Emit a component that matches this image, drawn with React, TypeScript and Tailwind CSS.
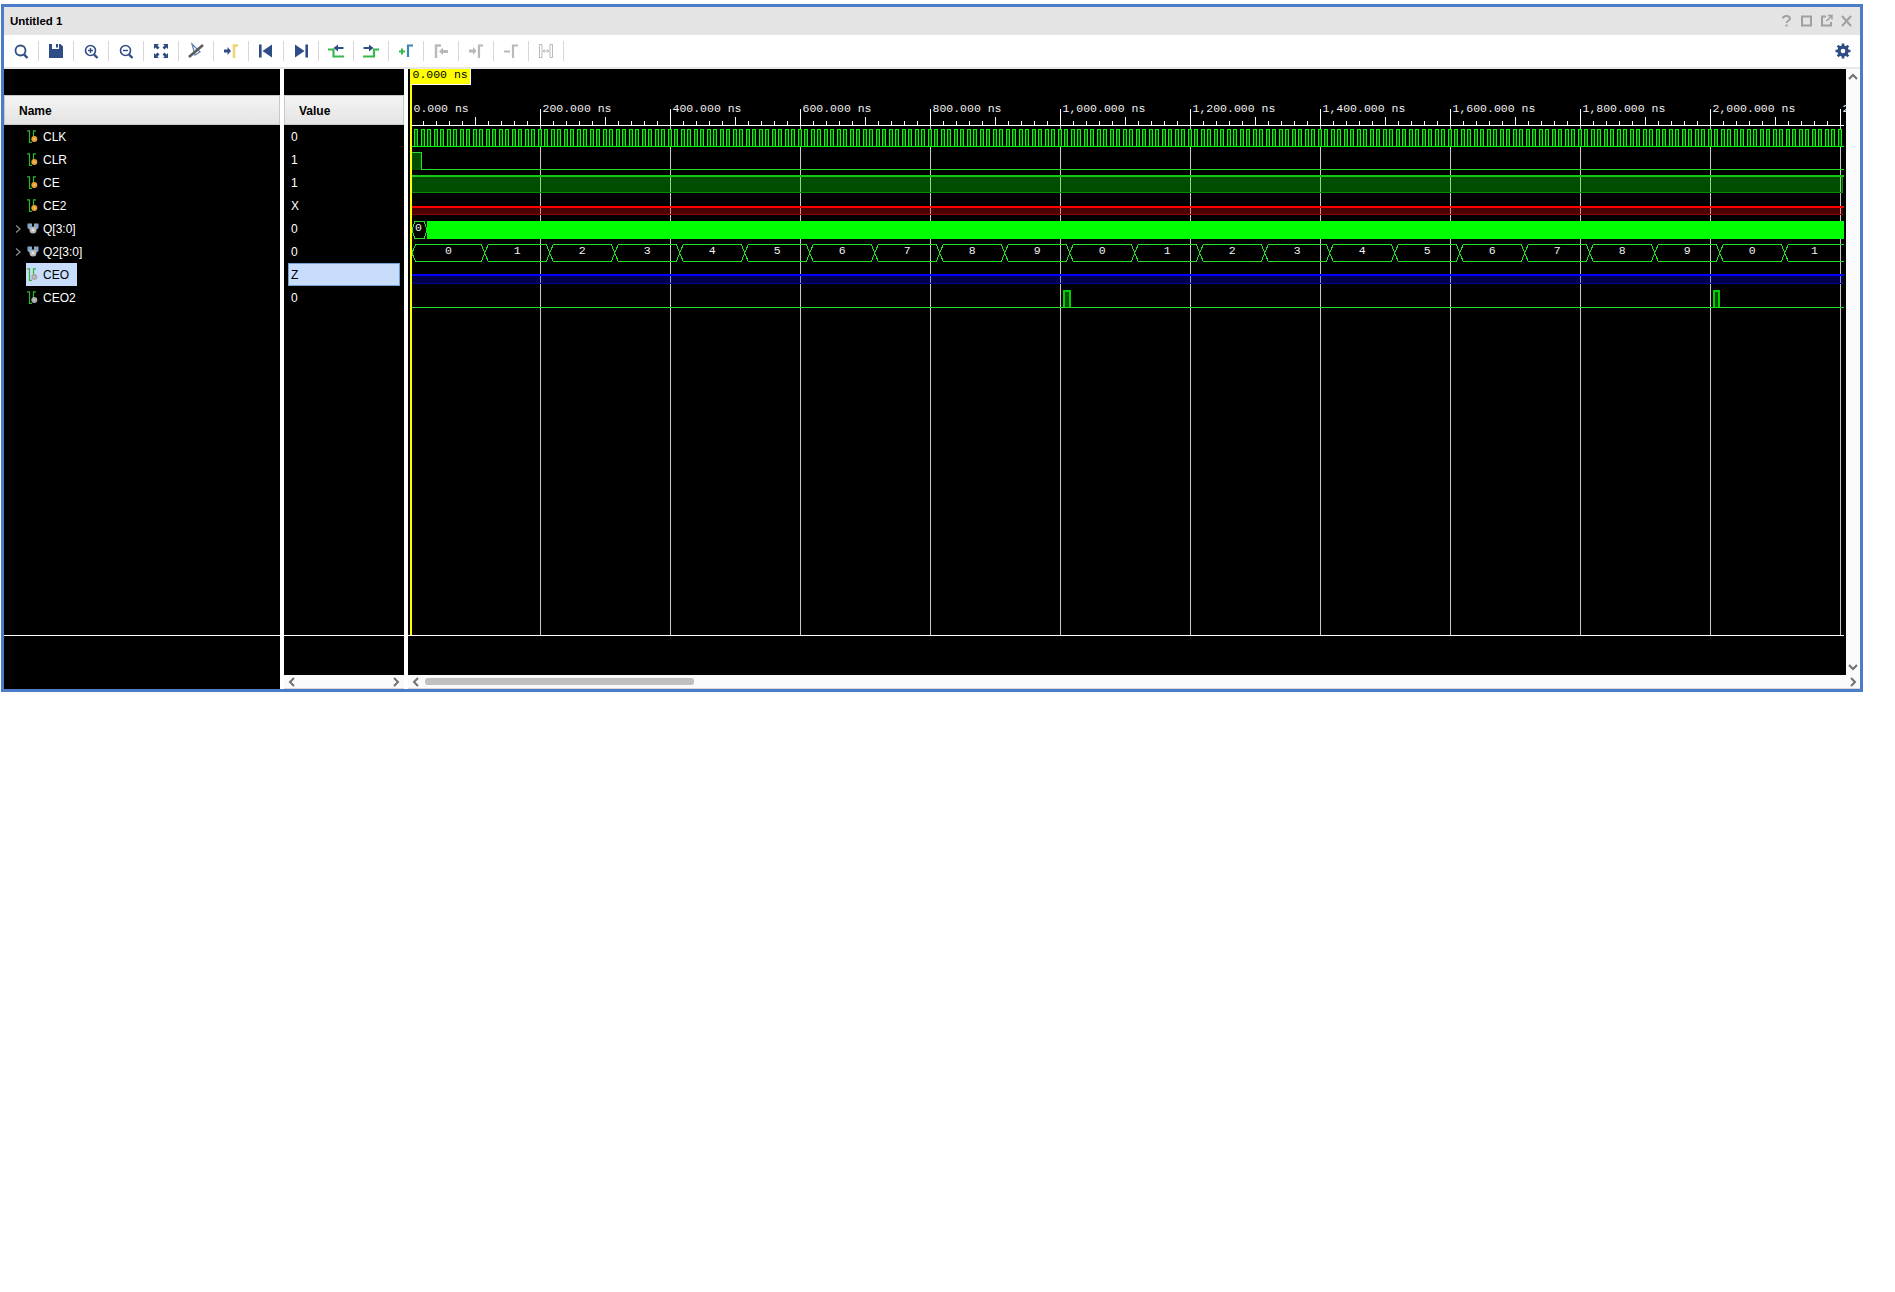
import React from "react";

const NAVY = "#2f4d85";
const GREY = "#b9b9b9";
const GREEN = "#2fb52f";

function I({ children, w = 20 }: { children: React.ReactNode; w?: number }) {
  return (
    <svg width={w} height={20} viewBox="0 0 20 20" fill="none">
      {children}
    </svg>
  );
}

const tools: React.ReactNode[] = [
  <I key="a">
    <circle cx="9.5" cy="9.5" r="5" stroke={NAVY} strokeWidth="1.8" />
    <path d="M13 13.5l3.5 3.5" stroke={NAVY} strokeWidth="2.4" />
  </I>,
  <I key="b">
    <path d="M3 3h3v5h7V3h1.5L17 5.5V17H3z" fill={NAVY} />
    <rect x="10" y="3" width="2" height="3.5" fill={NAVY} />
  </I>,
  <I key="c">
    <circle cx="9.5" cy="9.5" r="5" stroke={NAVY} strokeWidth="1.6" />
    <path d="M7 9.5h5M9.5 7v5" stroke={NAVY} strokeWidth="1.4" />
    <path d="M13 13.5l3.5 3.5" stroke={NAVY} strokeWidth="2.4" />
  </I>,
  <I key="d">
    <circle cx="9.5" cy="9.5" r="5" stroke={NAVY} strokeWidth="1.6" />
    <path d="M7 9.5h5" stroke={NAVY} strokeWidth="1.4" />
    <path d="M13 13.5l3.5 3.5" stroke={NAVY} strokeWidth="2.4" />
  </I>,
  <I key="e">
    <path d="M3 3h5L6.5 4.5 8.5 6.5 6.5 8.5 4.5 6.5 3 8zM17 3v5l-1.5-1.5-2 2-2-2 2-2L12 3zM3 17v-5l1.5 1.5 2-2 2 2-2 2L8 17zM17 17h-5l1.5-1.5-2-2 2-2 2 2L17 12z" fill={NAVY} />
  </I>,
  <I key="f">
    <path d="M6 3l3 11 5-3z" stroke="#5f82b5" strokeWidth="1.2" />
    <path d="M3 16L17 4" stroke="#5c5c5c" strokeWidth="2.6" />
  </I>,
  <I key="g">
    <path d="M3 8.5h3.5V6l3.5 4-3.5 4v-2.5H3z" fill={NAVY} />
    <path d="M13 17V4.5h4" stroke="#ecd47a" strokeWidth="2.6" />
  </I>,
  <I key="h">
    <rect x="3" y="3.5" width="2.6" height="13" fill={NAVY} />
    <path d="M16 3.5v13L6.5 10z" fill={NAVY} />
  </I>,
  <I key="i">
    <rect x="14.4" y="3.5" width="2.6" height="13" fill={NAVY} />
    <path d="M4 3.5v13L13.5 10z" fill={NAVY} />
  </I>,
  <I key="j">
    <path d="M2 8.5h5.5V15.5H18" stroke="#36b84a" strokeWidth="2.2" />
    <path d="M17.5 6H12V3.5L7.5 7l4.5 3.5V8h5.5z" fill={NAVY} />
  </I>,
  <I key="k">
    <path d="M2 15.5h11V8.5H18" stroke="#36b84a" strokeWidth="2.2" />
    <path d="M2.5 6H8V3.5L12.5 7 8 10.5V8H2.5z" fill={NAVY} />
  </I>,
  <I key="l">
    <path d="M3 10.5h6M6 7.5v6" stroke="#36b84a" strokeWidth="2" />
    <path d="M12 16V4.5h5" stroke="#3f86b8" strokeWidth="2.2" />
  </I>,
  <I key="m">
    <path d="M5 17V4.5h5" stroke={GREY} strokeWidth="2.4" />
    <path d="M17 9h-5V6.5L8 10.5l4 3.5V12h5z" fill={GREY} />
  </I>,
  <I key="n">
    <path d="M3 8.5h4V6l3.5 4L7 14v-2.5H3z" fill={GREY} />
    <path d="M13 17V4.5h4" stroke={GREY} strokeWidth="2.2" />
  </I>,
  <I key="o">
    <path d="M3 10.5h6" stroke={GREY} strokeWidth="2" />
    <path d="M12 17V4.5h5" stroke={GREY} strokeWidth="2.2" />
  </I>,
  <I key="p">
    <path d="M3.5 3.5h2.5v13H3.5zM14 3.5h2.5v13H14z" stroke={GREY} strokeWidth="1" />
    <path d="M7 10h6M7 10l2-1.5M7 10l2 1.5M13 10l-2-1.5M13 10l-2 1.5" stroke={GREY} strokeWidth="1" />
  </I>,
];

function WireIcon({ dot }: { dot: string }) {
  return (
    <svg width="14" height="14" viewBox="0 0 14 14" fill="none" className="shrink-0">
      <path d="M0 0.8H2.500V12.400H5M6.500 8V0.800H9" stroke={GREEN} strokeWidth="1.200" />
      <circle cx="7.300" cy="9" r="3" fill={dot} />
      <circle cx="7.300" cy="9" r="1" fill="#f5f5f5" opacity="0.450" />
    </svg>
  );
}

function BusIcon() {
  return (
    <svg width="14" height="14" viewBox="0 0 14 14" fill="none" className="shrink-0">
      <path d="M0.500 1.500H5V4.500L2.500 7.500 0.500 6zM11.500 1.500H7V4.500L9.500 7.500 11.500 6z" fill="#86a8c8" />
      <circle cx="6" cy="8" r="3.500" fill="#b8b8b8" />
      <circle cx="6" cy="8" r="1.300" fill="#e8e8e8" />
    </svg>
  );
}

const rows = [
  { name: "CLK", value: "0", dot: "#e8a030" },
  { name: "CLR", value: "1", dot: "#e8a030" },
  { name: "CE", value: "1", dot: "#e8a030" },
  { name: "CE2", value: "X", dot: "#e8a030" },
  { name: "Q[3:0]", value: "0", bus: true },
  { name: "Q2[3:0]", value: "0", bus: true },
  { name: "CEO", value: "Z", dot: "#a8a8a8", sel: true },
  { name: "CEO2", value: "0", dot: "#a8a8a8" },
];

const Chev = ({ d }: { d: string }) => (
  <svg width="10" height="10" viewBox="0 0 10 10" fill="none">
    <path d={d} stroke="#707070" strokeWidth="2" />
  </svg>
);
const LEFT = "M7 1L3 5l4 4";
const RIGHT = "M3 1l4 4-4 4";
const UP = "M1 7l4-4 4 4";
const DOWN = "M1 3l4 4 4-4";

const MONO = { fontFamily: '"Liberation Mono", monospace', fontSize: "11.5px" };

function Waves() {
  const END = 1844;
  const grid: number[] = [];
  for (let k = 1; k <= 11; k++) grid.push(410 + 130 * k);
  const ticks: number[] = [];
  for (let k = 1; 410 + 13 * k < END; k++) ticks.push(k);
  const clk: string[] = [];
  for (let n = 0; ; n++) {
    const x = Math.round(414 + 6.5 * n);
    if (x >= END - 4) break;
    clk.push(`M${x + 0.5} 146.5V129.5H${x + 3.5}V146.5`);
  }
  const digits = [0, 1, 2, 3, 4, 5, 6, 7, 8, 9, 0, 1, 2, 3, 4, 5, 6, 7, 8, 9, 0, 1];
  const bound = (k: number) => (k === 0 ? 412 : 484.75 + 65 * (k - 1));
  const labels = ["0.000 ns", "200.000 ns", "400.000 ns", "600.000 ns", "800.000 ns", "1,000.000 ns", "1,200.000 ns", "1,400.000 ns", "1,600.000 ns", "1,800.000 ns", "2,000.000 ns", "2"];

  return (
    <svg width="1438" height="606" viewBox="408 69 1438 606" fill="none" className="block shrink-0 bg-black" shapeRendering="crispEdges">
      {grid.map((x) => (
        <rect key={x} x={x} y={125} width={1} height={510} fill="#c8c8c8" />
      ))}
      {grid.map((x) => (
        <rect key={x} x={x} y={109} width={1} height={16} fill="#ffffff" />
      ))}
      {ticks.map((k) => (
        <rect key={k} x={410 + 13 * k} y={k % 5 === 0 ? 117 : 121} width={1} height={k % 5 === 0 ? 8 : 4} fill="#ffffff" />
      ))}
      <rect x={412} y={125} width={END - 412} height={1} fill="#ffffff" />
      {labels.map((t, i) => (
        <text key={i} x={i === 0 ? 413.5 : 412.5 + 130 * i} y={112} fill="#f0f0f0" xmlSpace="preserve" style={MONO}>
          {t}
        </text>
      ))}

      {/* CLK */}
      <path d={clk.join("")} fill="#004d00" stroke="#00ff00" />
      <path d={`M412 146.5H${END}`} stroke="#00ff00" />

      {/* CLR */}
      <path d="M412 152.5H422V169.5H412z" fill="#004d00" />
      <path d={`M412 152.5H421.5V169.5H${END}`} stroke="#22e022" />

      {/* CE */}
      <rect x={412} y={177} width={1431} height={16} fill="rgba(0,255,0,0.3)" />
      <rect x={412} y={175} width={END - 412} height={2} fill="#14c814" />
      <path d="M412 192.5H1842.5V177" stroke="#0a8a0a" />

      {/* CE2 */}
      <rect x={412} y={208} width={1431} height={7} fill="rgba(255,0,0,0.3)" />
      <rect x={412} y={206} width={END - 412} height={2} fill="#ff0000" />
      <path d="M412 214.5H1843" stroke="#8f0000" />

      {/* Q */}
      <rect x={427} y={221} width={END - 427} height={18} fill="#00ff00" />
      <path d="M412 230L415 221.5H424L427 230L424 238.5H415z" fill="#000000" stroke="#22e022" />
      <text x={418.5} y={231} textAnchor="middle" fill="#f0f0f0" style={MONO}>
        0
      </text>

      {/* Q2 */}
      {digits.map((d, k) => {
        const l = bound(k);
        const r = Math.min(bound(k + 1), END + 10);
        const clip = k === digits.length - 1;
        const c = clip ? (l + END) / 2 : (l + r) / 2;
        const path = clip
          ? `M${END} 244.5H${l + 3.5}L${l} 253L${l + 3.5} 261.5H${END}`
          : `M${l} 253L${l + 3.5} 244.5H${r - 3.5}L${r} 253L${r - 3.5} 261.5H${l + 3.5}z`;
        return (
          <g key={k}>
            <path d={path} stroke="#22e022" />
            <text x={c} y={254} textAnchor="middle" fill="#f0f0f0" style={MONO}>
              {d}
            </text>
          </g>
        );
      })}

      {/* CEO */}
      <rect x={412} y={276} width={1431} height={8} fill="rgba(0,0,255,0.3)" />
      <rect x={412} y={274} width={END - 412} height={2} fill="#0000ff" />
      <path d="M412 283.5H1843" stroke="#000090" />

      {/* CEO2 */}
      <rect x={1063} y={290} width={8} height={18} fill="#00d000" />
      <rect x={1065} y={292} width={4} height={15} fill="#004d00" />
      <rect x={1713} y={290} width={7} height={18} fill="#00d000" />
      <rect x={1715} y={292} width={3} height={15} fill="#004d00" />
      <path d={`M412 307.5H${END}`} stroke="#22e022" />

      {/* bottom rule */}
      <rect x={408} y={635} width={END - 408} height={1} fill="#ffffff" />

      {/* cursor */}
      <rect x={410} y={69} width={2} height={566} fill="#ffff00" />
      <rect x={411} y={69} width={60} height={16} fill="#ffffff" />
      <rect x={411} y={69} width={59} height={15} fill="#ffff00" />
      <text x={412.5} y={78} fill="#000000" xmlSpace="preserve" style={MONO}>
        0.000 ns
      </text>
    </svg>
  );
}

export default function App() {
  return (
    <div className="min-h-[1292px] bg-white pt-1 pl-px font-['Liberation_Sans',Arial,sans-serif] text-xs">
      <div className="flex h-[688px] w-[1862px] flex-col border-[3px] border-[#4a7cc8] bg-white">
        {/* title bar */}
        <div className="flex h-[28px] items-center justify-between bg-[#e4e4e4] pl-[6px] pr-[6px]">
          <span className="pt-px text-[11.5px] font-bold text-black">Untitled 1</span>
          <div className="flex items-center gap-[5px]">
            <svg width="15" height="14" viewBox="0 0 15 14" fill="none">
              <path d="M4 4.5C4 1.5 11 1 11 4.5C11 7 7.5 6.5 7.5 9" stroke="#a0a0a0" strokeWidth="2" />
              <rect x="6.5" y="10.5" width="2" height="2" fill="#a0a0a0" />
            </svg>
            <svg width="15" height="14" viewBox="0 0 15 14" fill="none">
              <rect x="3" y="2.5" width="9" height="9" stroke="#a0a0a0" strokeWidth="2" />
            </svg>
            <svg width="15" height="14" viewBox="0 0 15 14" fill="none">
              <path d="M7 2.5H3v9h9V8" stroke="#a0a0a0" strokeWidth="2" />
              <path d="M7.5 7L13 1.5M9 1.5h4v4" stroke="#a0a0a0" strokeWidth="1.5" />
            </svg>
            <svg width="15" height="14" viewBox="0 0 15 14" fill="none">
              <path d="M3 2l9 10M12 2L3 12" stroke="#a0a0a0" strokeWidth="2" />
            </svg>
          </div>
        </div>
        {/* toolbar */}
        <div className="flex h-[32px] items-center justify-between bg-white pr-[9px]">
          <div className="flex items-center">
            {tools.map((t, i) => (
              <div key={i} className="flex h-[20px] w-[35px] items-center justify-center border-r border-[#d8d8d8]">
                {t}
              </div>
            ))}
          </div>
          <svg width="16" height="16" viewBox="0 0 16 16" fill="none">
            <circle cx="8" cy="8" r="4" stroke={NAVY} strokeWidth="3.4" />
            <path d="M8 0.500v15M0.500 8h15M2.700 2.700l10.600 10.600M13.300 2.700L2.700 13.300" stroke={NAVY} strokeWidth="2.600" strokeDasharray="2.500 10" />
          </svg>
        </div>
        <div className="h-[2px] bg-[#e8e8e8]" />
        {/* body */}
        <div className="flex h-[620px]">
          {/* names */}
          <div className="flex w-[276px] flex-col bg-black">
            <div className="h-[26px]" />
            <div className="flex h-[30px] items-center border border-[#c8c8c8] bg-gradient-to-b from-[#f4f4f4] to-[#e4e4e4] pl-[14px] pt-px text-[12px] font-bold text-black">
              Name
            </div>
            <div className="h-[510px]">
              {rows.map((r) => (
                <div key={r.name} className="flex h-[23px] items-center">
                  <div className="flex w-[22px] justify-end pr-[4px]">
                    {r.bus && (
                      <svg width="8" height="10" viewBox="0 0 8 10" fill="none">
                        <path d="M2 1.500L6 5l-4 3.500" stroke="#8a8a8a" strokeWidth="1.300" />
                      </svg>
                    )}
                  </div>
                  <div className={`flex h-[23px] items-center gap-[2px] pl-[1px] pr-[8px] ${r.sel ? "bg-[#c8dcfb] text-black" : "text-white"}`}>
                    {r.bus ? <BusIcon /> : <WireIcon dot={r.dot as string} />}
                    <span className="text-[12px]">{r.name}</span>
                  </div>
                </div>
              ))}
            </div>
            <div className="h-[54px] border-t border-white" />
          </div>
          <div className="w-[4px] bg-white" />
          {/* values */}
          <div className="flex w-[120px] flex-col bg-black">
            <div className="h-[26px]" />
            <div className="flex h-[30px] items-center border border-[#c8c8c8] bg-gradient-to-b from-[#f4f4f4] to-[#e4e4e4] pl-[14px] pt-px text-[12px] font-bold text-black">
              Value
            </div>
            <div className="h-[510px] pl-[4px] pr-[4px]">
              {rows.map((r) => (
                <div
                  key={r.name}
                  className={`flex h-[23px] items-center text-[12px] ${r.sel ? "border border-[#6fa0d0] bg-[#c8dcfb] pl-[2px] text-black" : "pl-[3px] text-white"}`}
                >
                  {r.value}
                </div>
              ))}
            </div>
            <div className="h-[40px] border-t border-white" />
            <div className="flex h-[14px] items-center justify-between border-b border-[#d8d8d8] bg-[#fafafa] px-[3px]">
              <Chev d={LEFT} />
              <Chev d={RIGHT} />
            </div>
          </div>
          <div className="w-[4px] bg-white" />
          {/* wave */}
          <div className="flex w-[1452px] flex-col">
            <div className="flex h-[606px]">
              <Waves />
              <div className="flex w-[14px] flex-col items-center justify-between bg-[#fafafa] py-[3px]">
                <Chev d={UP} />
                <Chev d={DOWN} />
              </div>
            </div>
            <div className="flex h-[14px] items-center border-b border-[#d8d8d8] bg-[#fafafa] pl-[3px] pr-[2px]">
              <Chev d={LEFT} />
              <div className="ml-[4px] h-[7px] w-[269px] rounded-[3px] bg-[#c0c0c0]" />
              <div className="flex-1" />
              <Chev d={RIGHT} />
            </div>
          </div>
        </div>
      </div>
    </div>
  );
}
